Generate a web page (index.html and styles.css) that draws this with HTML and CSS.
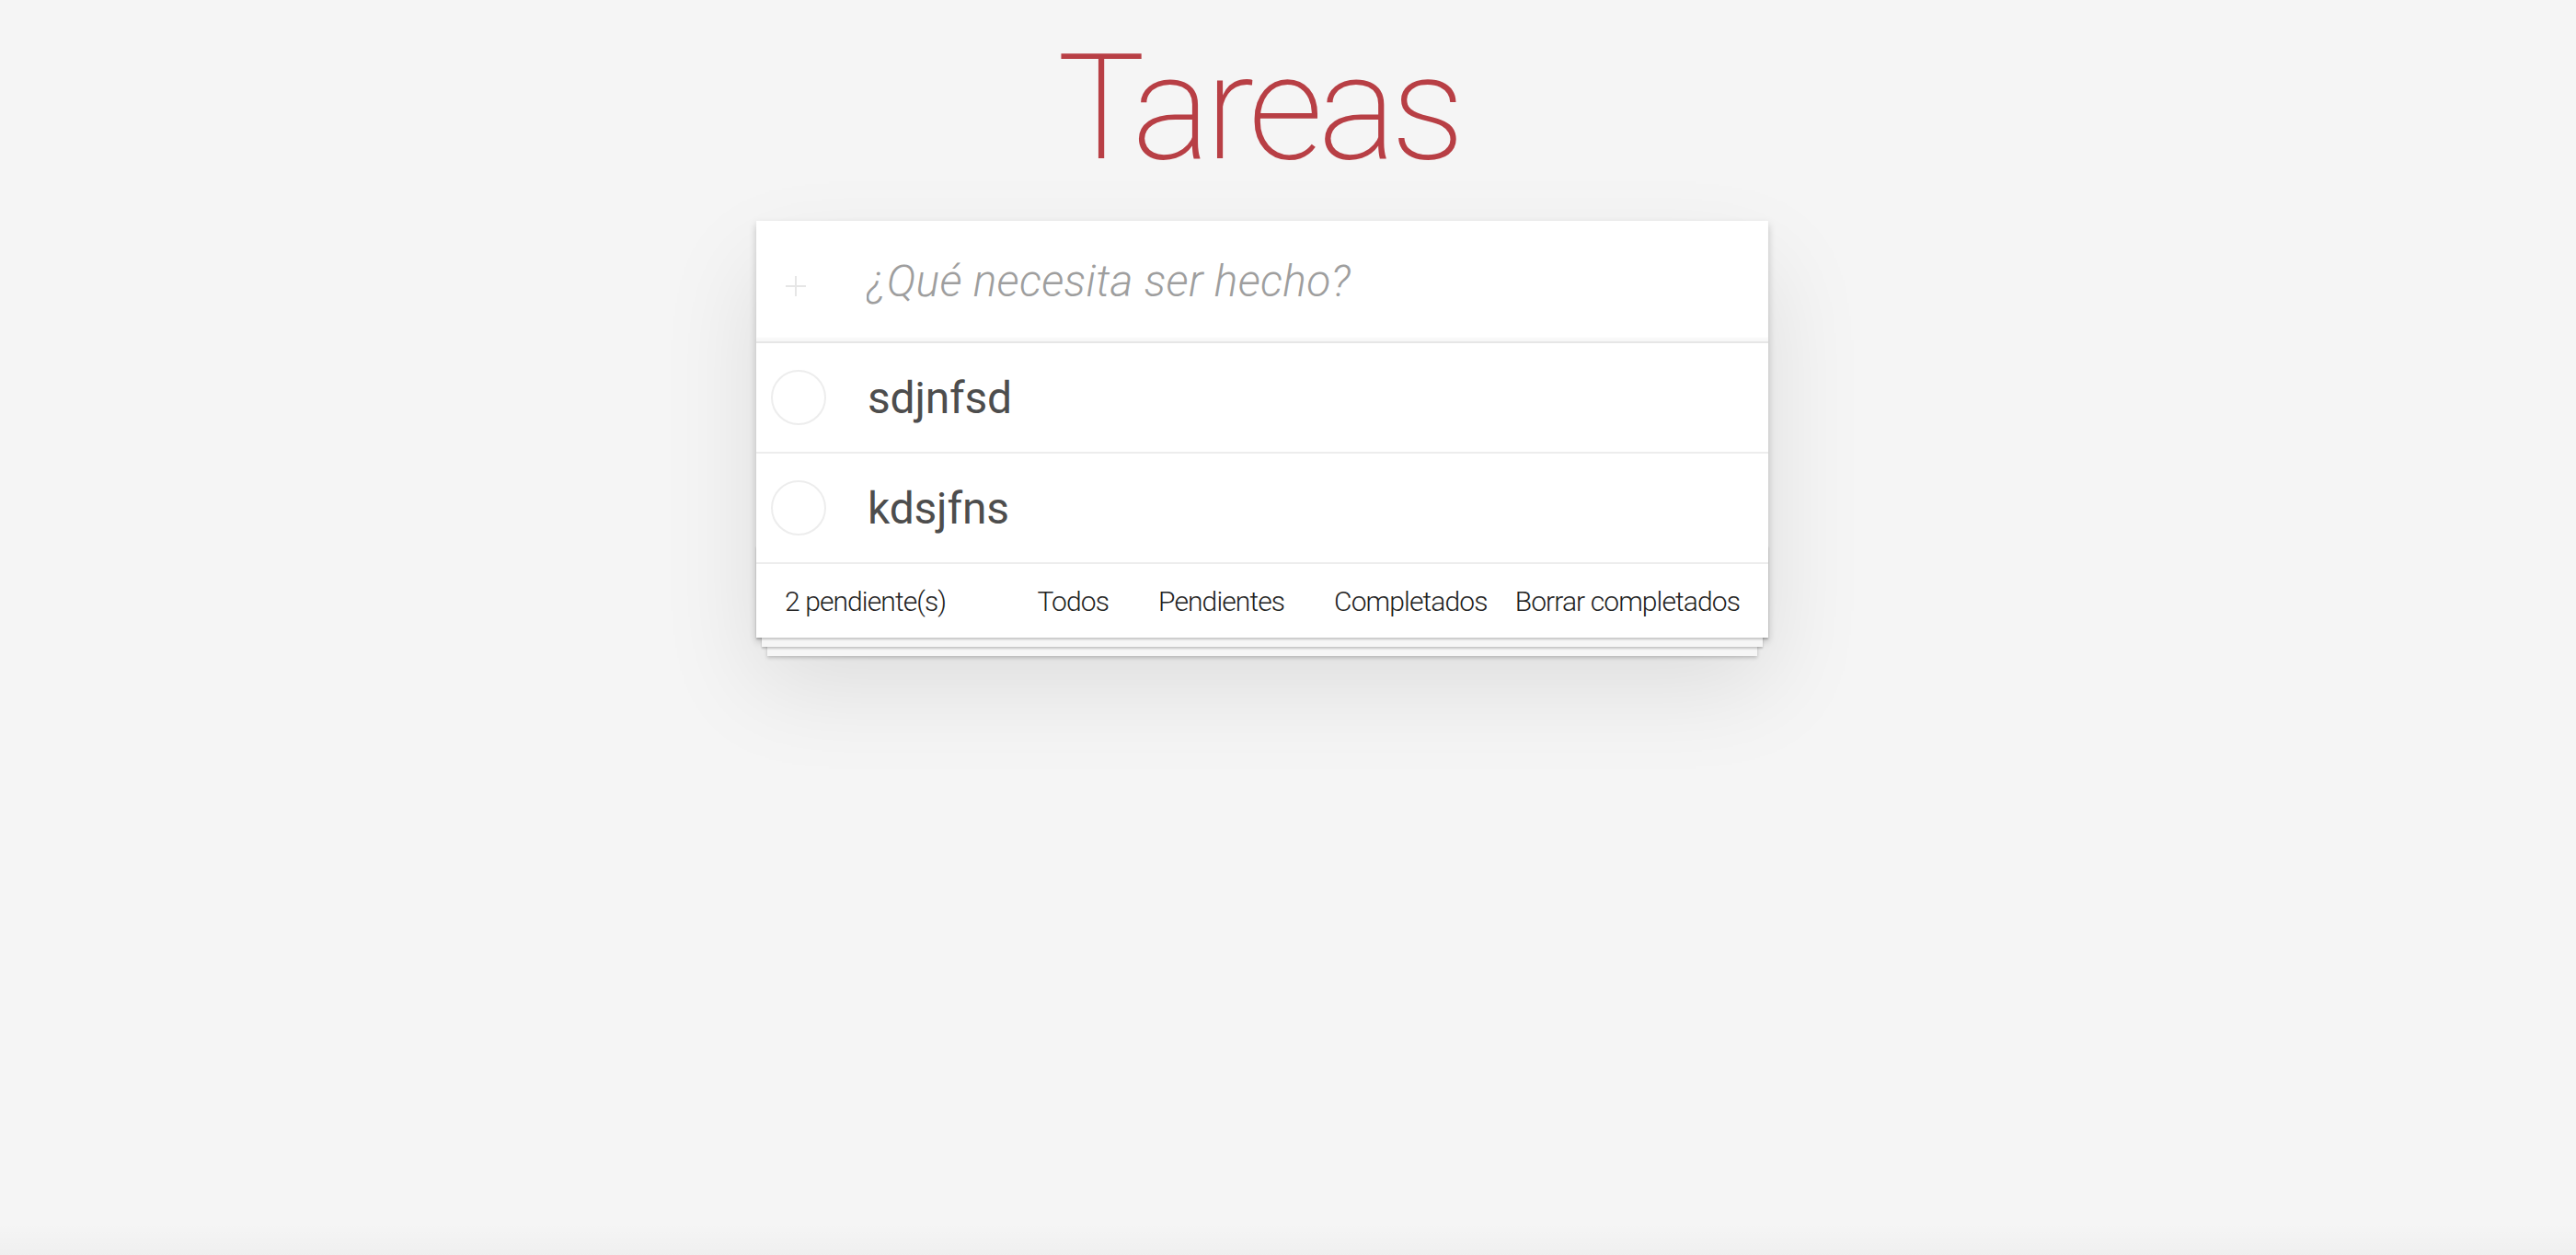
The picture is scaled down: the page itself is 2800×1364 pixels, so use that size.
FILE: index.html
```html
<!DOCTYPE html>
<html lang="es">
<head>
<meta charset="utf-8">
<title>Tareas</title>
<link rel="stylesheet" href="styles.css">
</head>
<body>
<div class="page">
  <h1 class="title">Tareas</h1>
  <section class="todoapp">
    <header class="header">
      <span class="plus" aria-hidden="true">
        <svg width="22" height="22" viewBox="0 0 22 22"><path d="M11 0V22M0 11H22" stroke="#e6e6e6" stroke-width="2" fill="none"/></svg>
      </span>
      <input class="new-todo" type="text" placeholder="¿Qué necesita ser hecho?">
    </header>
    <ul class="todo-list">
      <li class="todo">
        <span class="toggle"></span>
        <span class="label">sdjnfsd</span>
      </li>
      <li class="todo">
        <span class="toggle"></span>
        <span class="label">kdsjfns</span>
      </li>
    </ul>
    <footer class="footer">
      <span class="count">2 pendiente(s)</span>
      <nav class="filters">
        <a class="filter">Todos</a>
        <a class="filter">Pendientes</a>
        <a class="filter">Completados</a>
      </nav>
      <a class="clear">Borrar completados</a>
    </footer>
  </section>
  <div class="bottom-fade"></div>
</div>
</body>
</html>
```
FILE: styles.css
```css
html, body {
  margin: 0;
  padding: 0;
}
body {
  background: #f5f5f5;
  font-family: Roboto, "Liberation Sans", Arial, sans-serif;
  color: #4d4d4d;
}
.page {
  min-height: 100vh;
  box-sizing: border-box;
  padding: 38px 56px 0 0;
  display: flex;
  flex-direction: column;
  align-items: center;
}
.title {
  margin: 0 0 42px 0;
  padding-right: 8px;
  font-size: 160px;
  line-height: 160px;
  font-weight: 170;
  letter-spacing: -5.5px;
  color: #b83f45;
  text-align: center;
}
.todoapp {
  width: 1100px;
  background: #fff;
  position: relative;
  box-shadow: 0 4px 8px 0 rgba(0,0,0,0.2), 0 50px 100px 0 rgba(0,0,0,0.1);
}
.header {
  display: flex;
  align-items: center;
  height: 131px;
  box-shadow: inset 0 -4px 2px rgba(0,0,0,0.03);
}
.plus {
  width: 22px;
  height: 22px;
  margin: 10px 66px 0 32px;
  display: flex;
}
.new-todo {
  flex: 1;
  border: none;
  outline: none;
  background: transparent;
  padding: 0 32px 0 0;
  margin: 0;
  font-family: Roboto, "Liberation Sans", Arial, sans-serif;
  font-size: 48px;
  line-height: 67px;
  height: 67px;
  color: #4d4d4d;
}
.new-todo::placeholder {
  font-style: italic;
  font-weight: 300;
  color: #9e9e9e;
  letter-spacing: 0.3px;
}
.todo-list {
  list-style: none;
  margin: 0;
  padding: 0;
  border-top: 2px solid #e6e6e6;
}
.todo {
  display: flex;
  align-items: center;
  height: 118px;
  border-bottom: 2px solid #ededed;
}
.toggle {
  width: 56px;
  height: 56px;
  border: 2px solid #ededed;
  border-radius: 50%;
  margin: 0 45px 0 16px;
  flex: none;
}
.label {
  font-size: 48px;
  font-weight: 400;
  color: #4d4d4d;
  letter-spacing: -0.2px;
}
.footer {
  height: 80px;
  padding: 0 31px;
  display: grid;
  grid-template-columns: 1fr auto 1fr;
  align-items: center;
  font-size: 30px;
  font-weight: 300;
  letter-spacing: -0.9px;
  color: #222;
  position: relative;
}
.footer::before {
  content: "";
  position: absolute;
  left: 0;
  right: 0;
  bottom: 0;
  height: 100px;
  overflow: hidden;
  box-shadow: 0 2px 2px rgba(0,0,0,0.2),
              0 16px 0 -6px #f6f6f6,
              0 18px 2px -6px rgba(0,0,0,0.2),
              0 32px 0 -12px #f6f6f6,
              0 34px 4px -12px rgba(0,0,0,0.2);
  pointer-events: none;
}
.count {
  justify-self: start;
  position: relative;
}
.filters {
  display: flex;
  gap: 54px;
  position: relative;
}
.filter, .clear {
  color: #222;
  text-decoration: none;
}
.clear {
  justify-self: end;
  position: relative;
}
.bottom-fade {
  margin-top: auto;
  width: 2800px;
  margin-right: -56px;
  height: 34px;
  background: linear-gradient(to bottom, rgba(0,0,0,0), rgba(0,0,0,0.025));
}
```
